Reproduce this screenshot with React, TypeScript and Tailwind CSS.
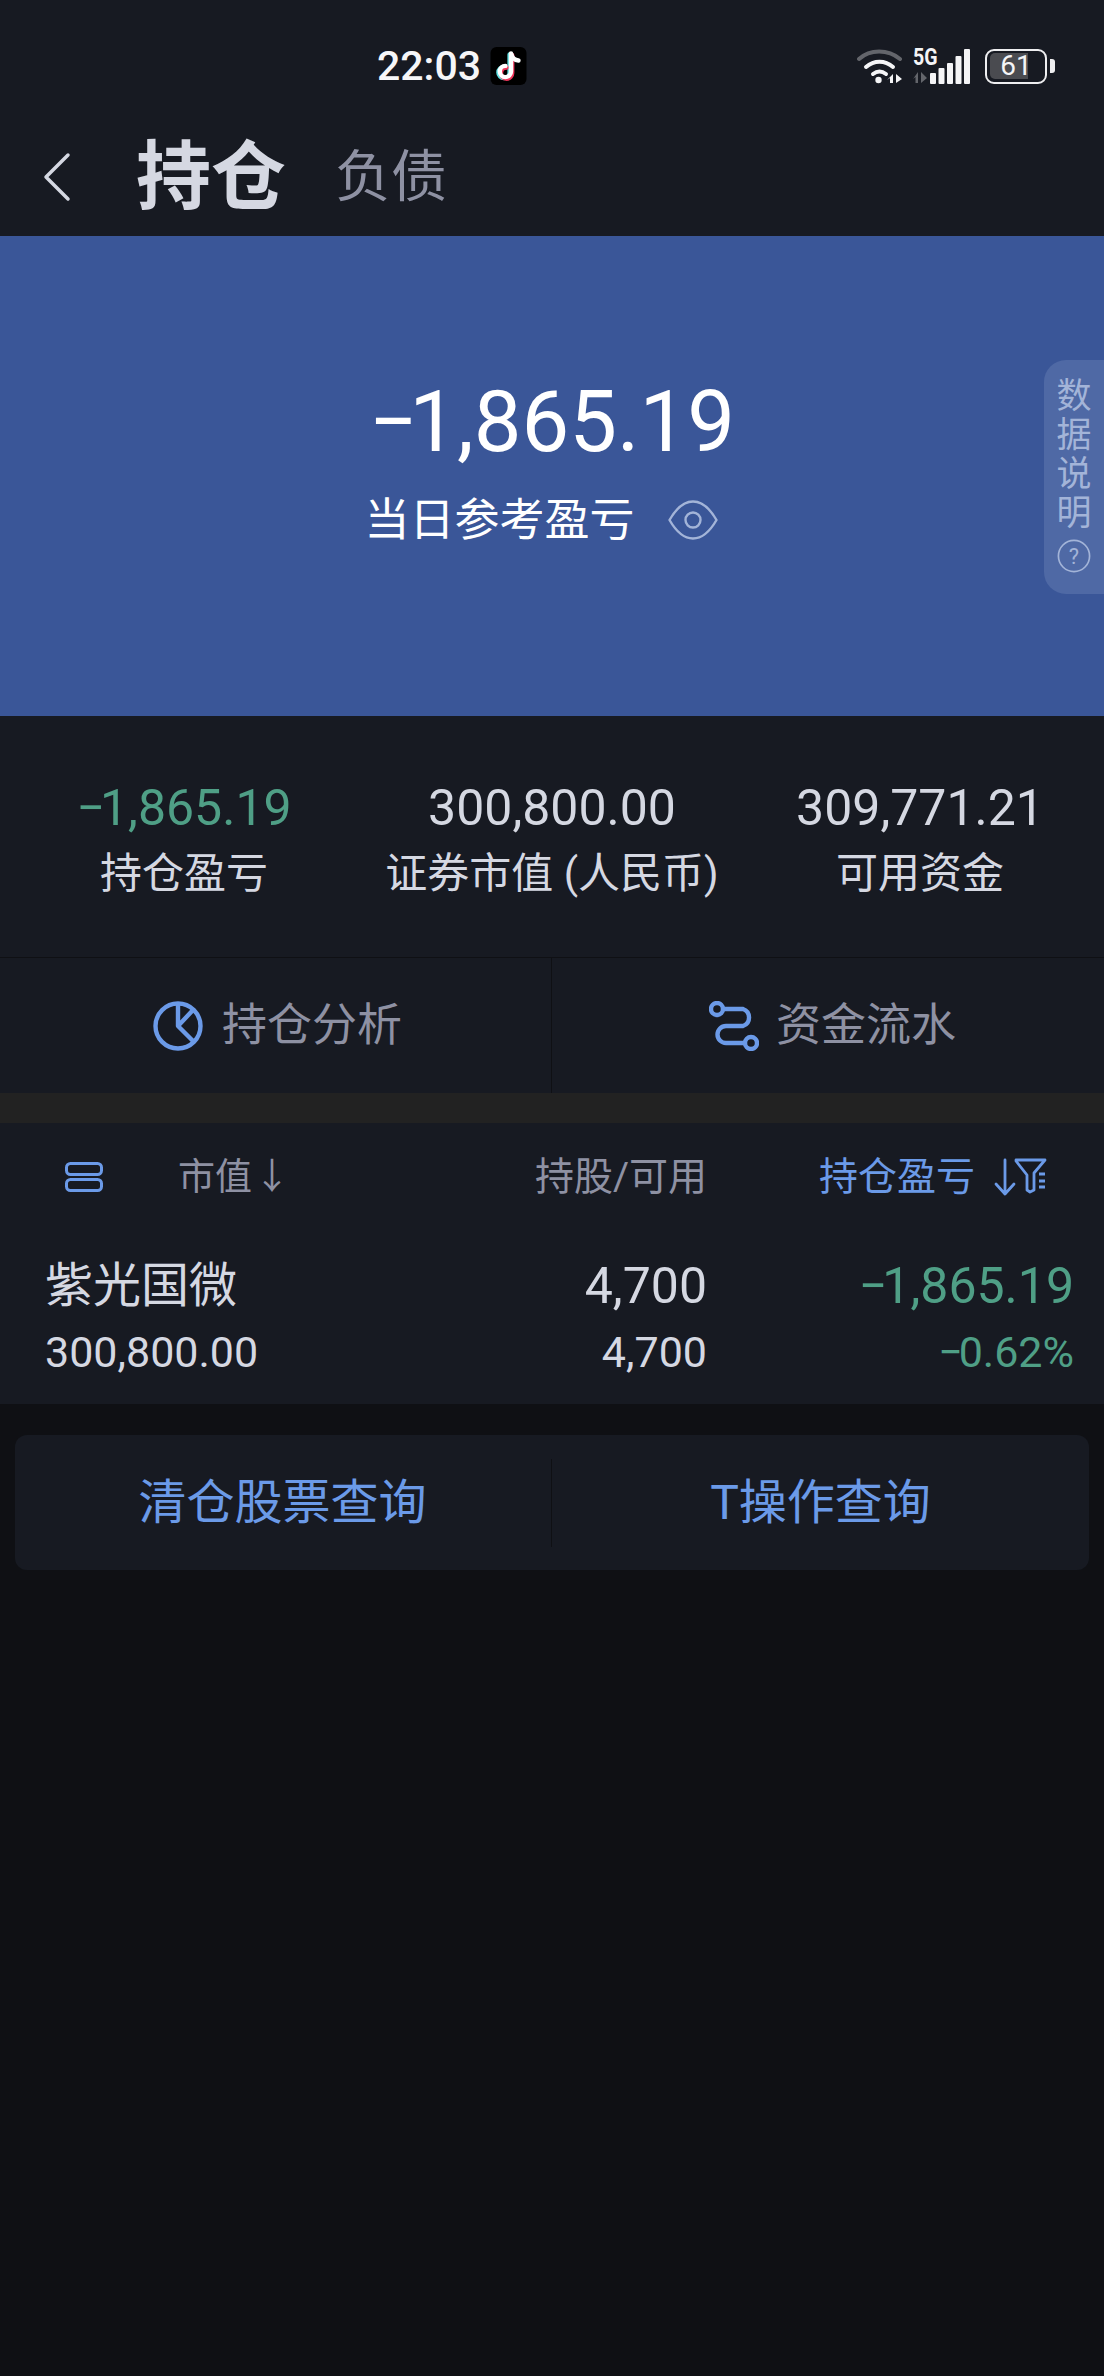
function Minus() {
  return <span className="tracking-[-0.1em]">−</span>;
}

function BackIcon() {
  return (
    <svg viewBox="0 0 28 50" className="h-[50px] w-[28px]" fill="none">
      <path d="M25 3 3 25l22 22" stroke="#d5d8e2" strokeWidth="3.5" strokeLinecap="round" strokeLinejoin="round" />
    </svg>
  );
}

function TikTokIcon() {
  return (
    <svg viewBox="0 0 36 38" className="ml-[9px] h-[38px] w-[37px]">
      <rect width="36" height="38" rx="6" fill="#000" />
      <g fill="none" strokeWidth="4.4" strokeLinecap="round">
        <path d="M20.5 6.500v18a5.600 5.600 0 1 1-5.600-5.600" stroke="#5ee0e3" transform="translate(-1.4 1)" />
        <path d="M20.5 6.500v18a5.600 5.600 0 1 1-5.600-5.600" stroke="#f0355a" transform="translate(1.2 1.6)" />
        <path d="M20.5 6.500v18a5.600 5.600 0 1 1-5.600-5.600" stroke="#fff" />
        <path d="M21 7.500c.8 3.600 3.400 5.600 7 6" stroke="#fff" />
      </g>
    </svg>
  );
}

function StatusIcons() {
  return (
    <div className="flex items-center">
      <svg viewBox="0 0 46 36" className="h-[36px] w-[46px]" fill="none">
        <path d="M2 11C13 1 31 1 43 11" stroke="#63656b" strokeWidth="4" strokeLinecap="round" />
        <path d="M9 19c8-7 19-7 27 0" stroke="#f4f4f6" strokeWidth="4" strokeLinecap="round" />
        <path d="M16 26c4-3 9-3 13 0" stroke="#f4f4f6" strokeWidth="4" strokeLinecap="round" />
        <circle cx="21.500" cy="32" r="3.200" fill="#f4f4f6" />
        <path d="M36 26v9h-3v-5l-3 2zM39 26l6 5-6 4z" fill="#f4f4f6" />
      </svg>
      <div className="relative ml-[9px] h-[36px] w-[58px]">
        <span className="absolute top-[-1px] left-[1px] origin-left scale-x-[0.85] text-[23px] leading-[22px] font-bold text-[#f4f4f6]">5G</span>
        <svg viewBox="0 0 58 36" className="h-[36px] w-[58px]">
          <path d="M6 24v11H3.500v-6L1 31zM9 24l6 6-6 5z" fill="#63656b" />
          <rect x="18" y="25" width="6" height="11" rx="1" fill="#f4f4f6" />
          <rect x="26.500" y="20" width="6" height="16" rx="1" fill="#f4f4f6" />
          <rect x="35" y="15" width="6" height="21" rx="1" fill="#f4f4f6" />
          <rect x="43.500" y="8" width="6" height="28" rx="1" fill="#f4f4f6" />
          <rect x="52" y="1" width="6" height="35" rx="1" fill="#f4f4f6" />
        </svg>
      </div>
      <div className="relative ml-[15px] flex h-[35px] w-[62px] items-center justify-center overflow-hidden rounded-[9px] border-[2.5px] border-[#eeeef0]">
        <div className="absolute inset-y-[2.5px] left-[2.5px] w-[38px] rounded-l-[5px] bg-[#4a4b50]" />
        <span className="relative text-[28px] leading-none text-[#f4f4f6]">61</span>
      </div>
      <div className="ml-[3px] h-[14px] w-[5px] rounded-r-[3px] bg-[#eeeef0]" />
    </div>
  );
}

function EyeIcon() {
  return (
    <svg viewBox="0 0 50 40" className="ml-[33px] h-[40px] w-[50px]" fill="none" stroke="#a3b4d8" strokeWidth="2.4">
      <path d="M1.500 20C9 7 17 1.500 25 1.500S41 7 48.500 20C41 33 33 38.500 25 38.500S9 33 1.500 20Z" strokeLinejoin="round" />
      <circle cx="25" cy="20" r="7.500" />
    </svg>
  );
}

function PieIcon() {
  return (
    <svg viewBox="0 0 50 50" className="h-[50px] w-[50px]" fill="none" stroke="#6b9ae8" strokeWidth="4.400" strokeLinejoin="round">
      <circle cx="25" cy="25" r="22.500" />
      <path d="M25 3v22l15 15M25 25 40 9" />
    </svg>
  );
}

function FlowIcon() {
  return (
    <svg viewBox="0 0 50 50" className="h-[50px] w-[50px]" fill="none" stroke="#6b9ae8" strokeWidth="4.400">
      <circle cx="8" cy="8" r="6" />
      <circle cx="42" cy="42" r="6" />
      <path d="M14 8h20a9 9 0 0 1 0 17H17a8.500 8.500 0 0 0 0 17h19" strokeLinecap="round" />
    </svg>
  );
}

function ListIcon() {
  return (
    <svg viewBox="0 0 38 30" className="h-[30px] w-[38px]" fill="none" stroke="#6b9ae8" strokeWidth="3">
      <rect x="1.500" y="1.500" width="35" height="11" rx="4" />
      <rect x="1.500" y="17.500" width="35" height="11" rx="4" />
    </svg>
  );
}

function SortFilterIcon() {
  return (
    <svg viewBox="0 0 54 38" className="h-[38px] w-[54px]" fill="none" stroke="#6b9ae8" strokeWidth="2.800" strokeLinecap="round" strokeLinejoin="round">
      <path d="M11 2v34M2 26l9 10 9-10" />
      <path d="M22 2h29l-11 13v17l-4 2-3-2V17L22 3Z" />
      <path d="M45 16h6M45 23h6M45 29h6" strokeLinecap="butt" strokeWidth="3" />
    </svg>
  );
}

export default function App() {
  return (
    <div className="relative flex h-[2376px] w-[1104px] flex-col overflow-hidden bg-[#0f1014] font-['Roboto','Noto_Sans_CJK_SC',sans-serif]">
      <div className="h-[236px] shrink-0 bg-[#171a22]">
        <div className="flex h-[84px] items-center pt-[48px] pl-[377px]">
          <span className="text-[41px] leading-none font-medium text-[#f6f6f8]">22:03</span>
          <TikTokIcon />
          <div className="ml-[330px]">
            <StatusIcons />
          </div>
        </div>
        <div className="flex h-[152px] items-center pt-[34px] pl-[43px]">
          <BackIcon />
          <span className="ml-[65px] text-[75px] leading-none font-bold text-[#d5d8e2]">持仓</span>
          <span className="ml-[49px] text-[56px] leading-none text-[#8e91a3]">负债</span>
        </div>
      </div>

      <div className="relative flex h-[480px] shrink-0 flex-col items-center bg-[#3a5698] pt-[124px]">
        <div className="h-[124px] text-[85px] leading-[124px] text-white"><Minus />1,865.19</div>
        <div className="mt-[6px] flex h-[60px] items-center pr-[22px]">
          <span className="text-[45px] leading-none text-white">当日参考盈亏</span>
          <EyeIcon />
        </div>
        <div className="absolute top-[124px] right-0 flex h-[234px] w-[60px] flex-col items-center rounded-l-[22px] bg-[#4f69a5] pt-[17px]">
          <span className="text-[35px] leading-[39px] text-[#a3b4d8]">数</span>
          <span className="text-[35px] leading-[39px] text-[#a3b4d8]">据</span>
          <span className="text-[35px] leading-[39px] text-[#a3b4d8]">说</span>
          <span className="text-[35px] leading-[39px] text-[#a3b4d8]">明</span>
          <svg viewBox="0 0 36 36" className="mt-[6px] h-[34px] w-[34px]" fill="none">
            <circle cx="18" cy="18" r="16.500" stroke="#a3b4d8" strokeWidth="1.800" />
            <text x="18" y="26" textAnchor="middle" fontSize="23" fill="#a3b4d8" fontFamily="Roboto, sans-serif">?</text>
          </svg>
        </div>
      </div>

      <div className="grid h-[241px] shrink-0 grid-cols-3 bg-[#171a22] pt-[59px] text-center">
        <div>
          <div className="h-[66px] text-[50px] leading-[66px] text-[#4f9f86]"><Minus />1,865.19</div>
          <div className="h-[66px] text-[42px] leading-[66px] text-[#d5d8e2]">持仓盈亏</div>
        </div>
        <div>
          <div className="h-[66px] text-[50px] leading-[66px] text-[#d5d8e2]">300,800.00</div>
          <div className="h-[66px] text-[42px] leading-[66px] text-[#d5d8e2]">证券市值 (人民币)</div>
        </div>
        <div>
          <div className="h-[66px] text-[50px] leading-[66px] text-[#d5d8e2]">309,771.21</div>
          <div className="h-[66px] text-[42px] leading-[66px] text-[#d5d8e2]">可用资金</div>
        </div>
      </div>

      <div className="grid h-[136px] shrink-0 grid-cols-2 border-t border-[#0f1014] bg-[#171a22]">
        <div className="flex items-center border-r border-[#0f1014] pl-[153px]">
          <PieIcon />
          <span className="ml-[19px] text-[45px] leading-none text-[#8e91a3]">持仓分析</span>
        </div>
        <div className="flex items-center pl-[157px]">
          <FlowIcon />
          <span className="ml-[17px] text-[45px] leading-none text-[#8e91a3]">资金流水</span>
        </div>
      </div>
      <div className="h-[30px] shrink-0 bg-[#222222]" />

      <div className="h-[281px] shrink-0 bg-[#171a22]">
        <div className="flex h-[108px] items-center">
          <div className="ml-[65px]">
            <ListIcon />
          </div>
          <span className="ml-[75px] text-[37px] leading-none text-[#8e91a3]">市值</span>
          <span className="ml-[2px] text-[36px] leading-none text-[#8e91a3]">↓</span>
          <span className="ml-[232px] w-[185px] text-right text-[39px] leading-none whitespace-nowrap text-[#8e91a3]">持股/可用</span>
          <span className="ml-[112px] text-[39px] leading-none text-[#6b9ae8]">持仓盈亏</span>
          <div className="ml-[19px]">
            <SortFilterIcon />
          </div>
        </div>
        <div className="flex pt-[22px] pr-[30px] pl-[45px]">
          <div className="flex-1">
            <div className="h-[66px] text-[48px] leading-[66px] text-[#d5d8e2]">紫光国微</div>
            <div className="h-[66px] text-[43px] leading-[66px] text-[#d5d8e2]">300,800.00</div>
          </div>
          <div className="text-right">
            <div className="h-[66px] text-[50px] leading-[66px] text-[#d5d8e2]">4,700</div>
            <div className="h-[66px] text-[43px] leading-[66px] text-[#d5d8e2]">4,700</div>
          </div>
          <div className="w-[367px] text-right">
            <div className="h-[66px] text-[50px] leading-[66px] text-[#4f9f86]"><Minus />1,865.19</div>
            <div className="h-[66px] text-[43px] leading-[66px] text-[#4f9f86]"><Minus />0.62%</div>
          </div>
        </div>
      </div>

      <div className="mx-[15px] mt-[31px] grid h-[135px] grid-cols-2 items-center rounded-[12px] bg-[#171a22]">
        <div className="flex h-[88px] items-center justify-center border-r border-[#0f1014] pr-[1px] text-[48px] leading-none text-[#6b9ae8]">清仓股票查询</div>
        <div className="flex h-[88px] items-center justify-center text-[48px] leading-none text-[#6b9ae8]">T操作查询</div>
      </div>
    </div>
  );
}
